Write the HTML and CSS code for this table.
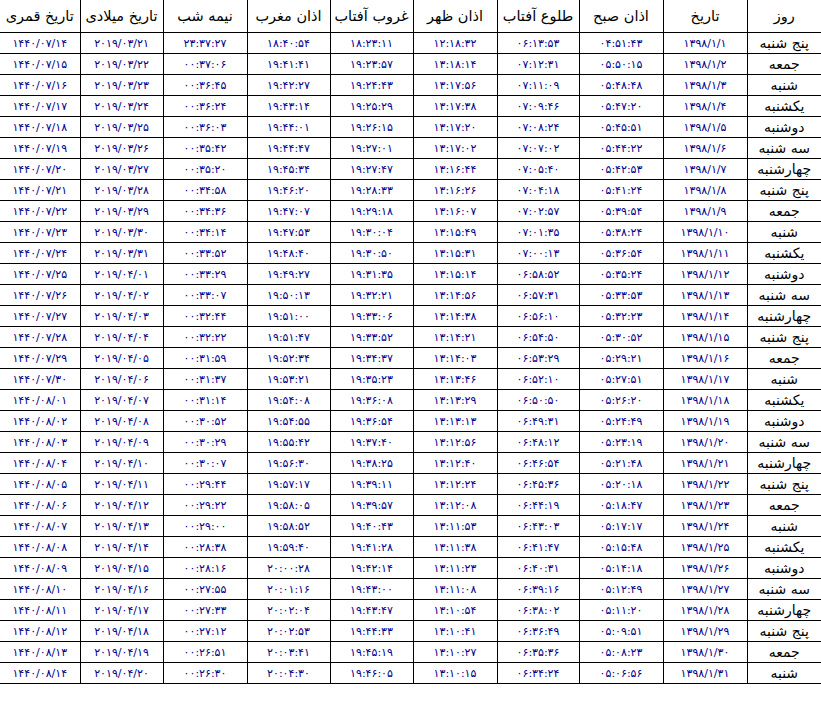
FILE: index.html
```html
<!DOCTYPE html>
<html lang="fa" dir="rtl">
<head>
<meta charset="utf-8">
<title>اوقات شرعی</title>
<link rel="stylesheet" href="styles.css">
</head>
<body>
<table class="times">
<colgroup>
<col class="w-day"><col class="w-date"><col class="w-fajr"><col class="w-sunrise"><col class="w-dhuhr"><col class="w-sunset"><col class="w-maghrib"><col class="w-mid"><col class="w-greg"><col class="w-hijri">
</colgroup>
<thead>
<tr><th>روز</th><th>تاریخ</th><th>اذان صبح</th><th>طلوع آفتاب</th><th>اذان ظهر</th><th>غروب آفتاب</th><th>اذان مغرب</th><th>نیمه شب</th><th>تاریخ میلادی</th><th>تاریخ قمری</th></tr>
</thead>
<tbody>
<tr><td class="day">پنج شنبه</td><td>۱۳۹۸/۱/۱</td><td>۰۴:۵۱:۴۳</td><td>۰۶:۱۳:۵۳</td><td>۱۲:۱۸:۳۲</td><td>۱۸:۲۳:۱۱</td><td>۱۸:۴۰:۵۴</td><td>۲۳:۳۷:۲۷</td><td>۲۰۱۹/۰۳/۲۱</td><td>۱۴۴۰/۰۷/۱۴</td></tr>
<tr><td class="day">جمعه</td><td>۱۳۹۸/۱/۲</td><td>۰۵:۵۰:۱۵</td><td>۰۷:۱۲:۳۱</td><td>۱۳:۱۸:۱۴</td><td>۱۹:۲۳:۵۷</td><td>۱۹:۴۱:۴۱</td><td>۰۰:۳۷:۰۶</td><td>۲۰۱۹/۰۳/۲۲</td><td>۱۴۴۰/۰۷/۱۵</td></tr>
<tr><td class="day">شنبه</td><td>۱۳۹۸/۱/۳</td><td>۰۵:۴۸:۴۸</td><td>۰۷:۱۱:۰۹</td><td>۱۳:۱۷:۵۶</td><td>۱۹:۲۴:۴۳</td><td>۱۹:۴۲:۲۷</td><td>۰۰:۳۶:۴۵</td><td>۲۰۱۹/۰۳/۲۳</td><td>۱۴۴۰/۰۷/۱۶</td></tr>
<tr><td class="day">یکشنبه</td><td>۱۳۹۸/۱/۴</td><td>۰۵:۴۷:۲۰</td><td>۰۷:۰۹:۴۶</td><td>۱۳:۱۷:۳۸</td><td>۱۹:۲۵:۲۹</td><td>۱۹:۴۳:۱۴</td><td>۰۰:۳۶:۲۴</td><td>۲۰۱۹/۰۳/۲۴</td><td>۱۴۴۰/۰۷/۱۷</td></tr>
<tr><td class="day">دوشنبه</td><td>۱۳۹۸/۱/۵</td><td>۰۵:۴۵:۵۱</td><td>۰۷:۰۸:۲۴</td><td>۱۳:۱۷:۲۰</td><td>۱۹:۲۶:۱۵</td><td>۱۹:۴۴:۰۱</td><td>۰۰:۳۶:۰۳</td><td>۲۰۱۹/۰۳/۲۵</td><td>۱۴۴۰/۰۷/۱۸</td></tr>
<tr><td class="day">سه شنبه</td><td>۱۳۹۸/۱/۶</td><td>۰۵:۴۴:۲۲</td><td>۰۷:۰۷:۰۲</td><td>۱۳:۱۷:۰۲</td><td>۱۹:۲۷:۰۱</td><td>۱۹:۴۴:۴۷</td><td>۰۰:۳۵:۴۲</td><td>۲۰۱۹/۰۳/۲۶</td><td>۱۴۴۰/۰۷/۱۹</td></tr>
<tr><td class="day">چهارشنبه</td><td>۱۳۹۸/۱/۷</td><td>۰۵:۴۲:۵۳</td><td>۰۷:۰۵:۴۰</td><td>۱۳:۱۶:۴۴</td><td>۱۹:۲۷:۴۷</td><td>۱۹:۴۵:۳۴</td><td>۰۰:۳۵:۲۰</td><td>۲۰۱۹/۰۳/۲۷</td><td>۱۴۴۰/۰۷/۲۰</td></tr>
<tr><td class="day">پنج شنبه</td><td>۱۳۹۸/۱/۸</td><td>۰۵:۴۱:۲۴</td><td>۰۷:۰۴:۱۸</td><td>۱۳:۱۶:۲۶</td><td>۱۹:۲۸:۳۳</td><td>۱۹:۴۶:۲۰</td><td>۰۰:۳۴:۵۸</td><td>۲۰۱۹/۰۳/۲۸</td><td>۱۴۴۰/۰۷/۲۱</td></tr>
<tr><td class="day">جمعه</td><td>۱۳۹۸/۱/۹</td><td>۰۵:۳۹:۵۴</td><td>۰۷:۰۲:۵۷</td><td>۱۳:۱۶:۰۷</td><td>۱۹:۲۹:۱۸</td><td>۱۹:۴۷:۰۷</td><td>۰۰:۳۴:۳۶</td><td>۲۰۱۹/۰۳/۲۹</td><td>۱۴۴۰/۰۷/۲۲</td></tr>
<tr><td class="day">شنبه</td><td>۱۳۹۸/۱/۱۰</td><td>۰۵:۳۸:۲۴</td><td>۰۷:۰۱:۳۵</td><td>۱۳:۱۵:۴۹</td><td>۱۹:۳۰:۰۴</td><td>۱۹:۴۷:۵۳</td><td>۰۰:۳۴:۱۴</td><td>۲۰۱۹/۰۳/۳۰</td><td>۱۴۴۰/۰۷/۲۳</td></tr>
<tr><td class="day">یکشنبه</td><td>۱۳۹۸/۱/۱۱</td><td>۰۵:۳۶:۵۴</td><td>۰۷:۰۰:۱۳</td><td>۱۳:۱۵:۳۱</td><td>۱۹:۳۰:۵۰</td><td>۱۹:۴۸:۴۰</td><td>۰۰:۳۳:۵۲</td><td>۲۰۱۹/۰۳/۳۱</td><td>۱۴۴۰/۰۷/۲۴</td></tr>
<tr><td class="day">دوشنبه</td><td>۱۳۹۸/۱/۱۲</td><td>۰۵:۳۵:۲۴</td><td>۰۶:۵۸:۵۲</td><td>۱۳:۱۵:۱۴</td><td>۱۹:۳۱:۳۵</td><td>۱۹:۴۹:۲۷</td><td>۰۰:۳۳:۲۹</td><td>۲۰۱۹/۰۴/۰۱</td><td>۱۴۴۰/۰۷/۲۵</td></tr>
<tr><td class="day">سه شنبه</td><td>۱۳۹۸/۱/۱۳</td><td>۰۵:۳۳:۵۳</td><td>۰۶:۵۷:۳۱</td><td>۱۳:۱۴:۵۶</td><td>۱۹:۳۲:۲۱</td><td>۱۹:۵۰:۱۳</td><td>۰۰:۳۳:۰۷</td><td>۲۰۱۹/۰۴/۰۲</td><td>۱۴۴۰/۰۷/۲۶</td></tr>
<tr><td class="day">چهارشنبه</td><td>۱۳۹۸/۱/۱۴</td><td>۰۵:۳۲:۲۳</td><td>۰۶:۵۶:۱۰</td><td>۱۳:۱۴:۳۸</td><td>۱۹:۳۳:۰۶</td><td>۱۹:۵۱:۰۰</td><td>۰۰:۳۲:۴۴</td><td>۲۰۱۹/۰۴/۰۳</td><td>۱۴۴۰/۰۷/۲۷</td></tr>
<tr><td class="day">پنج شنبه</td><td>۱۳۹۸/۱/۱۵</td><td>۰۵:۳۰:۵۲</td><td>۰۶:۵۴:۵۰</td><td>۱۳:۱۴:۲۱</td><td>۱۹:۳۳:۵۲</td><td>۱۹:۵۱:۴۷</td><td>۰۰:۳۲:۲۲</td><td>۲۰۱۹/۰۴/۰۴</td><td>۱۴۴۰/۰۷/۲۸</td></tr>
<tr><td class="day">جمعه</td><td>۱۳۹۸/۱/۱۶</td><td>۰۵:۲۹:۲۱</td><td>۰۶:۵۳:۲۹</td><td>۱۳:۱۴:۰۳</td><td>۱۹:۳۴:۳۷</td><td>۱۹:۵۲:۳۴</td><td>۰۰:۳۱:۵۹</td><td>۲۰۱۹/۰۴/۰۵</td><td>۱۴۴۰/۰۷/۲۹</td></tr>
<tr><td class="day">شنبه</td><td>۱۳۹۸/۱/۱۷</td><td>۰۵:۲۷:۵۱</td><td>۰۶:۵۲:۱۰</td><td>۱۳:۱۳:۴۶</td><td>۱۹:۳۵:۲۳</td><td>۱۹:۵۳:۲۱</td><td>۰۰:۳۱:۳۷</td><td>۲۰۱۹/۰۴/۰۶</td><td>۱۴۴۰/۰۷/۳۰</td></tr>
<tr><td class="day">یکشنبه</td><td>۱۳۹۸/۱/۱۸</td><td>۰۵:۲۶:۲۰</td><td>۰۶:۵۰:۵۰</td><td>۱۳:۱۳:۲۹</td><td>۱۹:۳۶:۰۸</td><td>۱۹:۵۴:۰۸</td><td>۰۰:۳۱:۱۴</td><td>۲۰۱۹/۰۴/۰۷</td><td>۱۴۴۰/۰۸/۰۱</td></tr>
<tr><td class="day">دوشنبه</td><td>۱۳۹۸/۱/۱۹</td><td>۰۵:۲۴:۴۹</td><td>۰۶:۴۹:۳۱</td><td>۱۳:۱۳:۱۳</td><td>۱۹:۳۶:۵۴</td><td>۱۹:۵۴:۵۵</td><td>۰۰:۳۰:۵۲</td><td>۲۰۱۹/۰۴/۰۸</td><td>۱۴۴۰/۰۸/۰۲</td></tr>
<tr><td class="day">سه شنبه</td><td>۱۳۹۸/۱/۲۰</td><td>۰۵:۲۳:۱۹</td><td>۰۶:۴۸:۱۲</td><td>۱۳:۱۲:۵۶</td><td>۱۹:۳۷:۴۰</td><td>۱۹:۵۵:۴۲</td><td>۰۰:۳۰:۲۹</td><td>۲۰۱۹/۰۴/۰۹</td><td>۱۴۴۰/۰۸/۰۳</td></tr>
<tr><td class="day">چهارشنبه</td><td>۱۳۹۸/۱/۲۱</td><td>۰۵:۲۱:۴۸</td><td>۰۶:۴۶:۵۴</td><td>۱۳:۱۲:۴۰</td><td>۱۹:۳۸:۲۵</td><td>۱۹:۵۶:۳۰</td><td>۰۰:۳۰:۰۷</td><td>۲۰۱۹/۰۴/۱۰</td><td>۱۴۴۰/۰۸/۰۴</td></tr>
<tr><td class="day">پنج شنبه</td><td>۱۳۹۸/۱/۲۲</td><td>۰۵:۲۰:۱۸</td><td>۰۶:۴۵:۳۶</td><td>۱۳:۱۲:۲۴</td><td>۱۹:۳۹:۱۱</td><td>۱۹:۵۷:۱۷</td><td>۰۰:۲۹:۴۴</td><td>۲۰۱۹/۰۴/۱۱</td><td>۱۴۴۰/۰۸/۰۵</td></tr>
<tr><td class="day">جمعه</td><td>۱۳۹۸/۱/۲۳</td><td>۰۵:۱۸:۴۷</td><td>۰۶:۴۴:۱۹</td><td>۱۳:۱۲:۰۸</td><td>۱۹:۳۹:۵۷</td><td>۱۹:۵۸:۰۵</td><td>۰۰:۲۹:۲۲</td><td>۲۰۱۹/۰۴/۱۲</td><td>۱۴۴۰/۰۸/۰۶</td></tr>
<tr><td class="day">شنبه</td><td>۱۳۹۸/۱/۲۴</td><td>۰۵:۱۷:۱۷</td><td>۰۶:۴۳:۰۳</td><td>۱۳:۱۱:۵۳</td><td>۱۹:۴۰:۴۳</td><td>۱۹:۵۸:۵۲</td><td>۰۰:۲۹:۰۰</td><td>۲۰۱۹/۰۴/۱۳</td><td>۱۴۴۰/۰۸/۰۷</td></tr>
<tr><td class="day">یکشنبه</td><td>۱۳۹۸/۱/۲۵</td><td>۰۵:۱۵:۴۸</td><td>۰۶:۴۱:۴۷</td><td>۱۳:۱۱:۳۸</td><td>۱۹:۴۱:۲۸</td><td>۱۹:۵۹:۴۰</td><td>۰۰:۲۸:۳۸</td><td>۲۰۱۹/۰۴/۱۴</td><td>۱۴۴۰/۰۸/۰۸</td></tr>
<tr><td class="day">دوشنبه</td><td>۱۳۹۸/۱/۲۶</td><td>۰۵:۱۴:۱۸</td><td>۰۶:۴۰:۳۱</td><td>۱۳:۱۱:۲۳</td><td>۱۹:۴۲:۱۴</td><td>۲۰:۰۰:۲۸</td><td>۰۰:۲۸:۱۶</td><td>۲۰۱۹/۰۴/۱۵</td><td>۱۴۴۰/۰۸/۰۹</td></tr>
<tr><td class="day">سه شنبه</td><td>۱۳۹۸/۱/۲۷</td><td>۰۵:۱۲:۴۹</td><td>۰۶:۳۹:۱۶</td><td>۱۳:۱۱:۰۸</td><td>۱۹:۴۳:۰۰</td><td>۲۰:۰۱:۱۶</td><td>۰۰:۲۷:۵۵</td><td>۲۰۱۹/۰۴/۱۶</td><td>۱۴۴۰/۰۸/۱۰</td></tr>
<tr><td class="day">چهارشنبه</td><td>۱۳۹۸/۱/۲۸</td><td>۰۵:۱۱:۲۰</td><td>۰۶:۳۸:۰۲</td><td>۱۳:۱۰:۵۴</td><td>۱۹:۴۳:۴۷</td><td>۲۰:۰۲:۰۴</td><td>۰۰:۲۷:۳۳</td><td>۲۰۱۹/۰۴/۱۷</td><td>۱۴۴۰/۰۸/۱۱</td></tr>
<tr><td class="day">پنج شنبه</td><td>۱۳۹۸/۱/۲۹</td><td>۰۵:۰۹:۵۱</td><td>۰۶:۳۶:۴۹</td><td>۱۳:۱۰:۴۱</td><td>۱۹:۴۴:۳۳</td><td>۲۰:۰۲:۵۳</td><td>۰۰:۲۷:۱۲</td><td>۲۰۱۹/۰۴/۱۸</td><td>۱۴۴۰/۰۸/۱۲</td></tr>
<tr><td class="day">جمعه</td><td>۱۳۹۸/۱/۳۰</td><td>۰۵:۰۸:۲۳</td><td>۰۶:۳۵:۳۶</td><td>۱۳:۱۰:۲۷</td><td>۱۹:۴۵:۱۹</td><td>۲۰:۰۳:۴۱</td><td>۰۰:۲۶:۵۱</td><td>۲۰۱۹/۰۴/۱۹</td><td>۱۴۴۰/۰۸/۱۳</td></tr>
<tr><td class="day">شنبه</td><td>۱۳۹۸/۱/۳۱</td><td>۰۵:۰۶:۵۶</td><td>۰۶:۳۴:۲۴</td><td>۱۳:۱۰:۱۵</td><td>۱۹:۴۶:۰۵</td><td>۲۰:۰۴:۳۰</td><td>۰۰:۲۶:۳۰</td><td>۲۰۱۹/۰۴/۲۰</td><td>۱۴۴۰/۰۸/۱۴</td></tr>
</tbody>
</table>
</body>
</html>
```

FILE: styles.css
```css
html, body {
  margin: 0;
  padding: 0;
  background: #ffffff;
}

body {
  direction: rtl;
  font-family: "DejaVu Sans", sans-serif;
  color: #000;
}

.times {
  width: 821px;
  table-layout: fixed;
  border-collapse: collapse;
  border-spacing: 0;
}

.w-day { width: 74px; }
.w-date { width: 84px; }
.w-fajr { width: 84px; }
.w-sunrise { width: 82px; }
.w-dhuhr { width: 84px; }
.w-sunset { width: 83px; }
.w-maghrib { width: 83px; }
.w-mid { width: 84px; }
.w-greg { width: 83px; }
.w-hijri { width: 80px; }

.times th,
.times td {
  padding: 0;
  text-align: center;
  white-space: nowrap;
  border-left: 1px solid #000;
  border-bottom: 1px solid #000;
}

.times th:last-child,
.times td:last-child {
  border-left: none;
}

.times th {
  height: 32px;
  font-weight: normal;
  font-size: 14.5px;
  color: #000;
}

.times td {
  height: 20px;
  font-size: 11px;
  letter-spacing: 1px;
  color: #00008b;
}

.times td.day {
  font-size: 14px;
  letter-spacing: 0;
  color: #000;
}
```
